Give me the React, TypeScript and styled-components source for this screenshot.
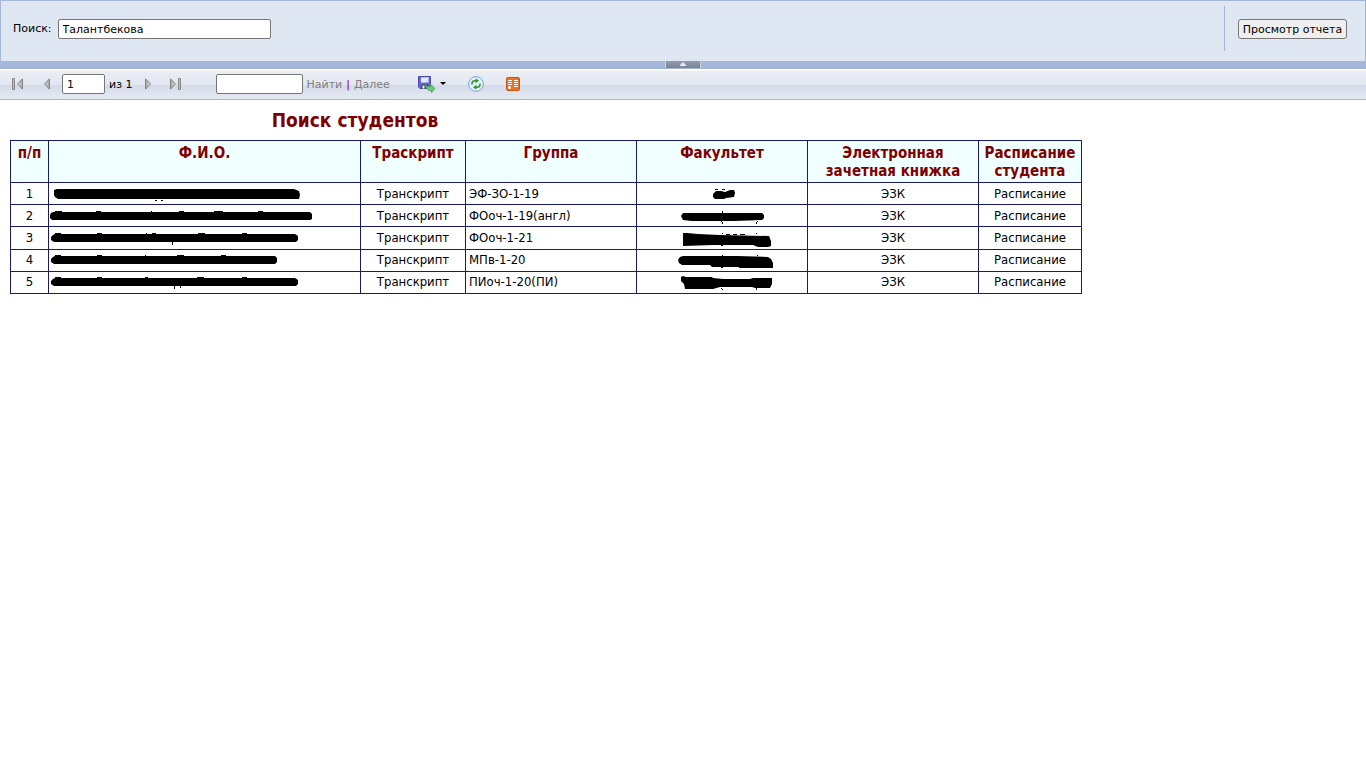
import React from "react";
import styled, { createGlobalStyle } from "styled-components";

const GlobalStyle = createGlobalStyle`
  * { box-sizing: border-box; }
  body { margin: 0; background: #fff; }
`;

const Page = styled.div`
  font-family: Verdana, "DejaVu Sans", sans-serif;
  font-size: 11px;
  color: #000;
`;

const ParameterForm = styled.form`
  display: flex;
  align-items: stretch;
  justify-content: space-between;
  height: 61px;
  padding: 5px 18px 10px 12px;
  background: #dfe7f2;
  border: 1px solid #a4b6d9;
  border-bottom: 0;
`;

const Field = styled.label`
  display: flex;
  align-items: center;
  gap: 6px;
`;

const TextInput = styled.input<{ $width: number }>`
  width: ${(p) => p.$width}px;
  height: 20px;
  margin: 0;
  padding: 2px 4px 1px;
  border: 1px solid #767676;
  border-radius: 2px;
  background: #fff;
  font: inherit;
  color: #000;
`;

const SubmitCell = styled.div`
  display: flex;
  align-items: center;
  padding-left: 13px;
  border-left: 1px solid #a4b6d9;
`;

const SubmitButton = styled.button`
  width: 109px;
  height: 20px;
  padding: 1px 0 0;
  border: 1px solid #767676;
  border-radius: 3px;
  background: #efefef;
  font: inherit;
  color: #000;
  white-space: nowrap;
`;

const Splitter = styled.div`
  display: flex;
  justify-content: center;
  height: 8px;
  background: #a4b6d9;
`;

const SplitterHandle = styled.button`
  display: flex;
  justify-content: center;
  width: 36px;
  height: 7px;
  padding: 1px 0 0;
  border: solid #c4cfdf;
  border-width: 0 1px;
  background: linear-gradient(#929cae, #7c8494);
`;

const Toolbar = styled.div`
  display: flex;
  align-items: center;
  height: 31px;
  padding: 0 11px 2px;
  border-top: 2px solid #fdfbf3;
  border-bottom: 1px solid #a4b6d9;
  background: linear-gradient(#ebeef6, #e1e6f0 48%, #d3dae9 52%, #e6eaf3);
`;

const ToolGroup = styled.div<{ $gap: number; $left?: number }>`
  display: flex;
  align-items: center;
  gap: ${(p) => p.$gap}px;
  margin-left: ${(p) => p.$left ?? 0}px;
`;

const IconButton = styled.button`
  display: flex;
  align-items: center;
  padding: 0;
  border: 0;
  background: none;
`;

const ToolLink = styled.a`
  color: #808080;
  text-decoration: none;
`;

const Bar = styled.span`
  color: #800080;
`;

const Report = styled.main`
  padding: 8px 10px;
  font-family: Tahoma, "DejaVu Sans Condensed", "DejaVu Sans", sans-serif;
`;

const Title = styled.h1`
  width: 690px;
  margin: 0 0 8px;
  font-size: 19px;
  line-height: 24px;
  text-align: center;
  color: #800000;
`;

const Table = styled.table`
  width: 1072px;
  height: 154px;
  table-layout: fixed;
  border-collapse: collapse;
  font-size: 13px;
  line-height: 16px;
`;

const HeadCell = styled.th`
  height: 42px;
  padding: 3px 2px 2px;
  border: 1px solid #191970;
  background: #f0ffff;
  vertical-align: top;
  font-size: 15px;
  line-height: 18px;
  color: #800000;
`;

const Cell = styled.td<{ $left?: boolean }>`
  padding: 2px 3px;
  border: 1px solid #191970;
  text-align: ${(p) => (p.$left ? "left" : "center")};
`;

const CellLink = styled.a`
  color: #000;
  text-decoration: none;
`;

const Drawing = styled.svg`
  display: block;
  flex: none;
`;

const Scribble = styled(Drawing)`
  margin: 0 auto;
  overflow: visible;
`;

const Metal = () => (
  <defs>
    <linearGradient id="metal">
      <stop offset="0" stopColor="#e2e2e2" />
      <stop offset="1" stopColor="#a0a0a0" />
    </linearGradient>
  </defs>
);

const PageArrow = ({ label, forward, end }: { label: string; forward?: boolean; end?: boolean }) => (
  <IconButton type="button" aria-label={label}>
    <Drawing width={end ? 12 : 7} height="12" viewBox={end ? "0 0 12 12" : "0 0 7 12"}>
      <Metal />
      <g
        fill="url(#metal)"
        stroke="#858585"
        transform={forward ? `translate(${end ? 12 : 7} 0) scale(-1 1)` : undefined}
      >
        {end && <path d="M1.5 .5h2v11h-2z" />}
        <path d={end ? "M11.500.8v10.400L6.500 6z" : "M6.500.8v10.400L1.500 6z"} />
      </g>
    </Drawing>
  </IconButton>
);

const SaveIcon = () => (
  <Drawing width="18" height="17" viewBox="0 0 18 17">
    <path d="M.5.5h12v12H2L.5 11z" fill="#6a68cf" stroke="#4a4aa8" />
    <path d="M3 1h7.500v5.500H3z" fill="#e4ebfd" />
    <path d="M3 1.500h7.500" stroke="#b4c0ea" />
    <path d="M3.500 8.500H10v4H3.500z" fill="#34375e" />
    <path d="M4.500 9.500h2V12.500h-2z" fill="#fff" />
    <path d="M7 8c1.500 2.500 3 3 5.500 2.500V8.500l4.500 4-3.500 4-.5-2C9.500 14.800 7.500 12 7 8z" fill="#6cc777" stroke="#3f9a52" strokeWidth=".8" />
  </Drawing>
);

const RefreshIcon = () => (
  <Drawing width="16" height="16" viewBox="0 0 16 16">
    <circle cx="8" cy="8" r="7.400" fill="#e3f0fb" stroke="#78a6d8" />
    <g fill="none" stroke="#2b982f" strokeWidth="1.600">
      <path d="M4 8.500V7.500c0-2 1-2.800 3-2.800h1" />
      <path d="M12 7.500v1c0 2-1 2.800-3 2.800H8" />
    </g>
    <path d="M7.500 2.200 11 4.700 7.500 7.200zM8.500 8.800 5 11.300l3.500 2.500z" fill="#2b982f" />
  </Drawing>
);

const FeedIcon = () => (
  <Drawing width="14" height="14" viewBox="0 0 14 14">
    <rect x=".5" y=".5" width="13" height="13" rx="1.500" fill="#ea7424" stroke="#cf560f" />
    <path d="M2 3.500h4M2 5.500h4M2 7.500h4M8 3.500h4M8 5.500h4M8 7.500h4M8 9.500h4" stroke="#fff" />
    <circle cx="3.500" cy="10.500" r="1.500" fill="#fff" />
  </Drawing>
);

const nameMarks = [
  "M1 4l3-1h237l5 2 1 4-1 4H5l-3-2-1-2zM102 14h2v1h-2zM108 14h2v1h-2z",
  "M-2 5l2-1h257l2 2v5l-2 1H-1l-2-2V7zM2 3h7v1H2zM43 3h5v1h-5zM98 3h1v1h-1zM126 3h5v1h-5zM161 3h9v1h-9zM205 3h5v1h-5z",
  "M0 5l2-1h240l3 2v4l-2 2H1l-3-2V7zM2 3h6v1H2zM44 3h5v1h-5zM93 3h1v1h-1zM99 3h4v1h-4zM145 3h7v1h-7zM189 3h5v1h-5zM119 12h1v3h-1z",
  "M0 5l2-1h220l2 2v4l-2 2H1l-3-2V7zM2 3h6v1H2zM44 3h5v1h-5zM92 3h1v1h-1zM124 3h7v1h-7zM168 3h5v1h-5z",
  "M0 5l2-1h240l3 2v4l-2 2H1l-3-2V7zM2 3h6v1H2zM44 3h5v1h-5zM92 3h3v1h-3zM144 3h7v1h-7zM189 3h5v1h-5zM121 12h1v3h-1zM127 12h1v2h-1z",
];

const facultyMarks = [
  "M41 8l3-3 5 0 4 1 5-2h4l1 3-1 4-8 1-2 1h-9l-2-2zM43 3h3v1h-3zM50 3h3v1h-3z",
  "M9 8l2-3h79l2 2v3l-2 2-28 1H20l-9-1zM50 3h1v2h-1zM49 13h1v1h-1zM50 14h1v2h-1zM85 13h1v1h-1zM84 14h1v2h-1z",
  "M11 3h4l11 1 22 1 49 1 2 5v5l-3 1H86l-5-2H41l-30 1zM50 3h1v1h-1zM54 4h4v1h-4zM61 4h4v1h-4zM68 4h5v1h-5zM84 3h1v1h-1zM49 15h2v1h-2z",
  "M6 8l2-3 3-1h54l31 1 3 2 2 4v5H68l-2-1H40l-2-2H10l-3-2zM50 3h1v1h-1zM85 3h1v1h-1zM49 15h2v1h-2z",
  "M9 3l2-1 3 1h26l1 1 10 1h27l3-1h19v6l-2 4H83l-3-1H48l-7 2H13l-1-5-3-3zM49 14h1v1h-1zM50 15h1v1h-1zM84 14h1v2h-1z",
];

const Redaction = ({ path, width }: { path: string; width: number }) => (
  <Scribble width={width} height="16" viewBox={`0 0 ${width} 16`} role="img" aria-label="Скрыто">
    <path d={path} />
  </Scribble>
);

const columns = [38, 312, 105, 171, 171, 171, 103];
const headings = ["п/п", "Ф.И.О.", "Траскрипт", "Группа", "Факультет", "Электронная зачетная книжка", "Расписание студента"];
const groups = ["ЭФ-ЗО-1-19", "ФОоч-1-19(англ)", "ФОоч-1-21", "МПв-1-20", "ПИоч-1-20(ПИ)"];

export default function App() {
  return (
    <Page>
      <GlobalStyle />
      <ParameterForm onSubmit={(e) => e.preventDefault()}>
        <Field>
          Поиск:
          <TextInput $width={213} defaultValue="Талантбекова" />
        </Field>
        <SubmitCell>
          <SubmitButton type="submit">Просмотр отчета</SubmitButton>
        </SubmitCell>
      </ParameterForm>
      <Splitter>
        <SplitterHandle type="button" aria-label="Свернуть">
          <Drawing width="6" height="4" viewBox="0 0 6 4">
            <path d="M3 0l3 3v1H0V3z" fill="#e3eaf4" />
          </Drawing>
        </SplitterHandle>
      </Splitter>
      <Toolbar>
        <ToolGroup $gap={20}>
          <PageArrow label="Первая страница" end />
          <PageArrow label="Предыдущая страница" />
        </ToolGroup>
        <ToolGroup $gap={4} $left={12}>
          <TextInput $width={43} defaultValue="1" aria-label="Страница" />
          <span>из 1</span>
        </ToolGroup>
        <ToolGroup $gap={18} $left={12}>
          <PageArrow label="Следующая страница" forward />
          <PageArrow label="Последняя страница" forward end />
        </ToolGroup>
        <ToolGroup $gap={4} $left={34}>
          <TextInput $width={87} aria-label="Текст для поиска" />
          <ToolLink href="#find">Найти</ToolLink>
          <Bar>|</Bar>
          <ToolLink href="#next">Далее</ToolLink>
        </ToolGroup>
        <ToolGroup $gap={22} $left={28}>
          <IconButton type="button" aria-label="Экспорт">
            <SaveIcon />
            <Drawing width="10" height="4" viewBox="0 0 10 4">
              <path d="M4 0h6L7 3z" />
            </Drawing>
          </IconButton>
          <IconButton type="button" aria-label="Обновить">
            <RefreshIcon />
          </IconButton>
          <IconButton type="button" aria-label="Экспорт в канал данных">
            <FeedIcon />
          </IconButton>
        </ToolGroup>
      </Toolbar>
      <Report>
        <Title>Поиск студентов</Title>
        <Table>
          <colgroup>
            {columns.map((w, i) => (
              <col key={i} width={w} />
            ))}
          </colgroup>
          <thead>
            <tr>
              {headings.map((h) => (
                <HeadCell key={h} scope="col">{h}</HeadCell>
              ))}
            </tr>
          </thead>
          <tbody>
            {groups.map((group, i) => (
              <tr key={group}>
                <Cell>{i + 1}</Cell>
                <Cell $left><Redaction path={nameMarks[i]} width={304} /></Cell>
                <Cell><CellLink href="#transcript">Транскрипт</CellLink></Cell>
                <Cell $left>{group}</Cell>
                <Cell><Redaction path={facultyMarks[i]} width={100} /></Cell>
                <Cell><CellLink href="#book">ЭЗК</CellLink></Cell>
                <Cell><CellLink href="#schedule">Расписание</CellLink></Cell>
              </tr>
            ))}
          </tbody>
        </Table>
      </Report>
    </Page>
  );
}
